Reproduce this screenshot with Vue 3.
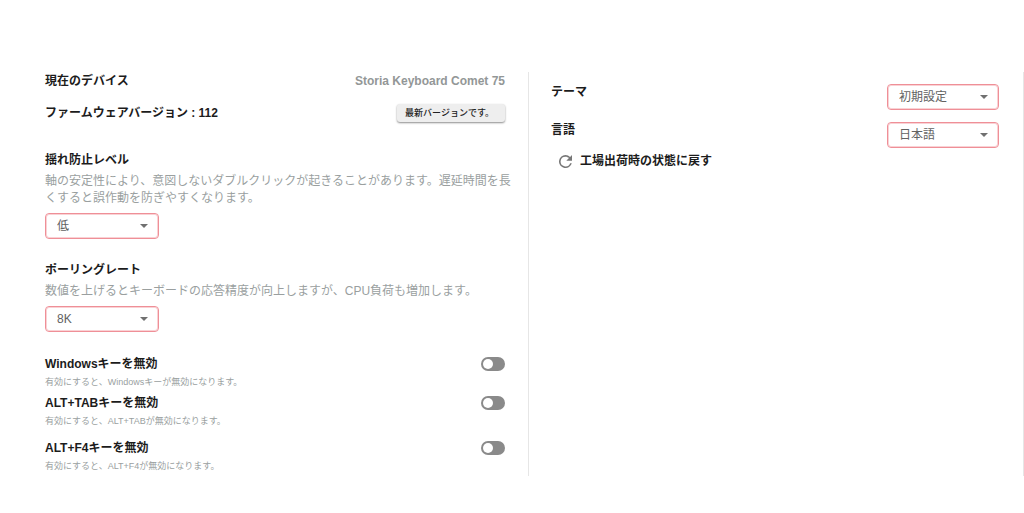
<!--
  Device settings page: keyboard options on the left, application options on the right.
-->

<script setup lang="js">
import {ref} from "vue";

const deviceName = ref("Storia Keyboard Comet 75")
const firmware = ref("112")

const selects = ref([
    {
        id: "debounce",
        title: "揺れ防止レベル",
        text: "軸の安定性により、意図しないダブルクリックが起きることがあります。遅延時間を長くすると誤作動を防ぎやすくなります。",
        value: "低",
        options: ["低", "中", "高"]
    },
    {
        id: "polling",
        title: "ポーリングレート",
        text: "数値を上げるとキーボードの応答精度が向上しますが、CPU負荷も増加します。",
        value: "8K",
        options: ["1K", "2K", "4K", "8K"]
    }
])

const switches = ref([
    {id: "win", title: "Windowsキーを無効", text: "有効にすると、Windowsキーが無効になります。", on: false},
    {id: "alttab", title: "ALT+TABキーを無効", text: "有効にすると、ALT+TABが無効になります。", on: false},
    {id: "altf4", title: "ALT+F4キーを無効", text: "有効にすると、ALT+F4が無効になります。", on: false}
])

const appOptions = ref([
    {id: "theme", title: "テーマ", value: "初期設定", options: ["初期設定", "ダーク"]},
    {id: "language", title: "言語", value: "日本語", options: ["日本語", "English"]}
])
</script>

<template>
    <main class="settings">
        <section class="panel device">
            <div class="row">
                <span class="title">現在のデバイス</span>
                <span class="title device-name">{{ deviceName }}</span>
            </div>
            <div class="row firmware">
                <span class="title">ファームウェアバージョン : {{ firmware }}</span>
                <button type="button" class="version-button">最新バージョンです。</button>
            </div>

            <div class="options">
                <div v-for="item in selects" :key="item.id" class="option">
                    <label class="title" :for="item.id">{{ item.title }}</label>
                    <p class="description">{{ item.text }}</p>
                    <div class="select-box">
                        <select :id="item.id" v-model="item.value">
                            <option v-for="o in item.options" :key="o">{{ o }}</option>
                        </select>
                        <svg class="arrow" viewBox="0 0 8 4"><path d="M0 0h8L4 4z"/></svg>
                    </div>
                </div>
            </div>

            <div class="switches">
                <div v-for="item in switches" :key="item.id" class="switch-item">
                    <div class="row">
                        <label class="title" :for="item.id">{{ item.title }}</label>
                        <input :id="item.id" v-model="item.on" type="checkbox" class="switch"/>
                    </div>
                    <p class="hint">{{ item.text }}</p>
                </div>
            </div>
        </section>

        <section class="panel app">
            <div v-for="item in appOptions" :key="item.id" class="app-row">
                <label class="title" :for="item.id">{{ item.title }}</label>
                <div class="select-box">
                    <select :id="item.id" v-model="item.value">
                        <option v-for="o in item.options" :key="o">{{ o }}</option>
                    </select>
                    <svg class="arrow" viewBox="0 0 8 4"><path d="M0 0h8L4 4z"/></svg>
                </div>
            </div>
            <button type="button" class="reset title">
                <svg class="reset-icon" viewBox="4 4 16 16">
                    <path d="M17.65 6.35A7.96 7.96 0 0 0 12 4a8 8 0 1 0 7.73 10h-2.08A6 6 0 1 1 12 6c1.66 0 3.14.69 4.22 1.78L13 11h7V4z"/>
                </svg>
                工場出荷時の状態に戻す
            </button>
        </section>
    </main>
</template>

<style>
body {
    background-color: #ffffff;
}
</style>

<style scoped>
.settings {
    display: grid;
    grid-template-columns: 1fr 1fr;
    padding: 72px 0 36px 34px;
    font-family: "Liberation Sans", "Noto Sans CJK JP", sans-serif;
    font-size: 12px;
    color: #1c1c1c;
}
.panel {
    border-right: 1px solid #e6e6e6;
}
.device {
    padding: 0 12px 4px 11px;
}
.row {
    display: flex;
    justify-content: space-between;
    align-items: center;
    padding-right: 11px;
}
.title {
    font-size: 12px;
    font-weight: bold;
    line-height: 18px;
}
.device-name {
    color: #939797;
}
.firmware {
    margin-top: 14px;
}
.version-button {
    height: 18px;
    padding: 0 11px 0 8px;
    border: none;
    border-radius: 3px;
    background-color: #eeeeee;
    box-shadow: 0 1px 2px rgba(0, 0, 0, 0.45);
    font-family: inherit;
    font-size: 9px;
    font-weight: 500;
    line-height: 16px;
    color: #222222;
}
.options {
    display: flex;
    flex-direction: column;
    gap: 22px;
    margin-top: 29px;
}
.option .title {
    display: block;
}
.description {
    margin: 4px 0 6px;
    line-height: 17px;
    color: #9a9f9f;
}
.select-box {
    display: grid;
    align-items: center;
    width: 114px;
}
.select-box select, .arrow {
    grid-area: 1 / 1;
}
.select-box select {
    appearance: none;
    width: 100%;
    height: 26px;
    padding: 0 11px;
    border: 1px solid #ef8f97;
    border-radius: 4px;
    outline: 1px solid rgba(239, 143, 151, 0.4);
    outline-offset: -2px;
    background-color: #ffffff;
    font-family: inherit;
    font-size: 12px;
    color: #626262;
}
.arrow {
    justify-self: end;
    width: 8px;
    height: 4px;
    margin-right: 11px;
    fill: #707070;
    pointer-events: none;
}
.switches {
    margin-top: 23px;
}
.switch-item + .switch-item {
    margin-top: 6px;
}
.switch-item:last-child {
    margin-top: 12px;
}
.switch {
    display: flex;
    align-items: center;
    appearance: none;
    width: 24px;
    height: 14px;
    margin: 0;
    padding: 0 2px;
    border-radius: 7px;
    background-color: #8a8a8a;
}
.switch::before {
    content: "";
    width: 10px;
    height: 10px;
    border-radius: 50%;
    background-color: #ffffff;
}
.switch:checked {
    justify-content: flex-end;
    background-color: #ef8f97;
}
.hint {
    margin: 3px 0 0;
    font-size: 9px;
    line-height: 12px;
    color: #9a9f9f;
}
.app {
    padding: 12px 24px 0 22px;
}
.app-row {
    display: flex;
    justify-content: space-between;
    align-items: flex-start;
    margin-bottom: 12px;
}
.app-row .title {
    line-height: 16px;
}
.app-row .select-box {
    width: 112px;
}
.reset {
    display: flex;
    align-items: center;
    gap: 8px;
    margin: -8px 0 0;
    padding: 0 8px;
    border: none;
    background: none;
    font-family: inherit;
    color: inherit;
}
.reset-icon {
    width: 13px;
    height: 13px;
    fill: #777777;
}
</style>
